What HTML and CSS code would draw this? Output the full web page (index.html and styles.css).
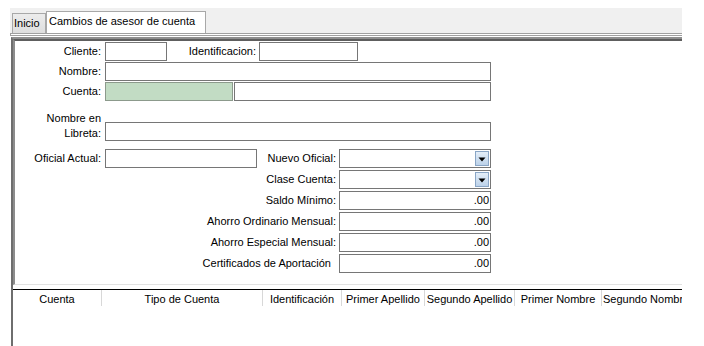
FILE: index.html
```html
<!DOCTYPE html>
<html>
<head>
<meta charset="utf-8">
<link rel="stylesheet" href="styles.css">
</head>
<body>
<div class="window">
  <div class="tabbar">
    <div class="tab">Inicio</div>
    <div class="tab active">Cambios de asesor de cuenta</div>
  </div>
  <div class="strip"></div>
  <div class="frame">
    <div class="panel">
      <div class="row r1">
        <label class="lbl w86">Cliente:</label>
        <div class="box w62"></div>
        <label class="lbl w89">Identificacion:</label>
        <div class="box w99"></div>
      </div>
      <div class="row r1">
        <label class="lbl w86">Nombre:</label>
        <div class="box w386"></div>
      </div>
      <div class="row r1">
        <label class="lbl w86">Cuenta:</label>
        <div class="box green w128"></div>
        <div class="box w257 tight"></div>
      </div>
      <div class="row libreta">
        <label class="lbl w86 two">Nombre en<br>Libreta:</label>
        <div class="box w386"></div>
      </div>
      <div class="row oficial">
        <label class="lbl w86">Oficial Actual:</label>
        <div class="box w152"></div>
        <label class="lbl w79">Nuevo Oficial:</label>
        <div class="box w152 select"><span class="drop"><svg width="12" height="12" viewBox="0 0 12 12"><polygon points="2.5,4.5 9.5,4.5 6,8.5" fill="#000"/></svg></span></div>
      </div>
      <div class="row r2">
        <label class="lbl w321">Clase Cuenta:</label>
        <div class="box w152 select"><span class="drop"><svg width="12" height="12" viewBox="0 0 12 12"><polygon points="2.5,4.5 9.5,4.5 6,8.5" fill="#000"/></svg></span></div>
      </div>
      <div class="row r2">
        <label class="lbl w321">Saldo Mínimo:</label>
        <div class="box w152 num">.00</div>
      </div>
      <div class="row r2">
        <label class="lbl w321">Ahorro Ordinario Mensual:</label>
        <div class="box w152 num">.00</div>
      </div>
      <div class="row r2">
        <label class="lbl w321">Ahorro Especial Mensual:</label>
        <div class="box w152 num">.00</div>
      </div>
      <div class="row r2">
        <label class="lbl w321 nocolon">Certificados de Aportación</label>
        <div class="box w152 num">.00</div>
      </div>
    </div>
    <div class="grid-head">
      <div class="th c1">Cuenta</div>
      <div class="th c2">Tipo de Cuenta</div>
      <div class="th c3">Identificación</div>
      <div class="th c4">Primer Apellido</div>
      <div class="th c5">Segundo Apellido</div>
      <div class="th c6">Primer Nombre</div>
      <div class="th c7">Segundo Nombr</div>
    </div>
    <div class="grid-body"></div>
  </div>
</div>
</body>
</html>
```
FILE: styles.css
```css
* { box-sizing: border-box; }
html, body { margin: 0; padding: 0; background: #fff; }
body {
  font-family: "Liberation Sans", Arial, sans-serif;
  font-size: 11px;
  color: #000;
  width: 704px;
  height: 346px;
  overflow: hidden;
}
.window {
  padding: 8px 22px 0 10px;
}
.tabbar {
  height: 25px;
  background: #f0f0f0;
  display: flex;
  align-items: flex-end;
  padding-left: 2px;
}
.tab {
  height: 20px;
  line-height: 19px;
  padding: 0 2px 0 1px;
  border: 1px solid #a8a8a8;
  border-bottom: none;
  background: linear-gradient(#ececec, #dedede);
  width: 34px;
}
.tab.active {
  height: 22px;
  line-height: 18px;
  background: #fff;
  width: 160px;
  padding-left: 2px;
  margin-left: 0;
}
.strip {
  height: 3px;
  border-top: 1px solid #a0a0a0;
  border-bottom: 1px solid #a0a0a0;
  border-left: 1px solid #a0a0a0;
  background: #fff;
  margin-bottom: 1px;
}
.frame {
  margin-left: 1px;
  border-left: 2px solid #6e6e6e;
  border-top: 2px solid #8e8e8e;
  height: 320px;
}
.panel {
  border-top: 2px solid #5e5e5e;
  border-left: 2px solid #8c8c8c;
  border-bottom: 1px solid #e2e2e2;
  padding-bottom: 11px;
  display: flex;
  flex-direction: column;
}
.row {
  display: flex;
  align-items: flex-end;
  height: 19px;
}
.r1 { margin-top: 1px; }
.libreta { margin-top: 10px; height: 30px; }
.oficial { margin-top: 8px; }
.r2 { margin-top: 2px; }
.lbl {
  text-align: right;
  line-height: 19px;
  white-space: nowrap;
  margin-right: 4px;
}
.lbl.w89, .lbl.w79, .lbl.w321 { margin-right: 3px; }
.lbl.two { line-height: 15px; }
.lbl.nocolon { padding-right: 5px; }
.w86 { width: 86px; }
.w89 { width: 89px; }
.w79 { width: 79px; }
.w321 { width: 321px; }
.box {
  height: 19px;
  border: 1px solid #767676;
  background: #fff;
  position: relative;
}
.w62 { width: 62px; }
.w99 { width: 99px; }
.w386 { width: 386px; }
.w128 { width: 128px; }
.w257 { width: 257px; }
.w152 { width: 152px; }
.tight { margin-left: 1px; }
.green { background: #c2dcc4; border-color: #8c9a8c; }
.num {
  text-align: right;
  line-height: 17px;
  padding-right: 1px;
}
.select .drop {
  position: absolute;
  right: 1px;
  top: 1px;
  width: 14px;
  height: 15px;
  border: 1px solid #8aa6c6;
  background: linear-gradient(#e4eef8, #bcd2ea);
  display: flex;
  align-items: center;
  justify-content: center;
}
.grid-head {
  margin-top: 4px;
  display: flex;
  border-top: 1px solid #000;
  background: #d8d8d8;
  height: 17px;
  overflow: hidden;
}
.th {
  background: #fff;
  border-bottom: 1px solid #000;
  height: 17px;
  line-height: 18px;
  text-align: center;
  white-space: nowrap;
  overflow: hidden;
  margin-right: 1px;
}
.c1 { width: 88px; }
.c2 { width: 160px; }
.c3 { width: 78px; }
.c4 { width: 82px; }
.c5 { width: 89px; }
.c6 { width: 86px; }
.c7 { width: 80px; margin-right: 0; text-align: left; padding-left: 1px; }
.grid-body {
  background: #fff;
}
```
